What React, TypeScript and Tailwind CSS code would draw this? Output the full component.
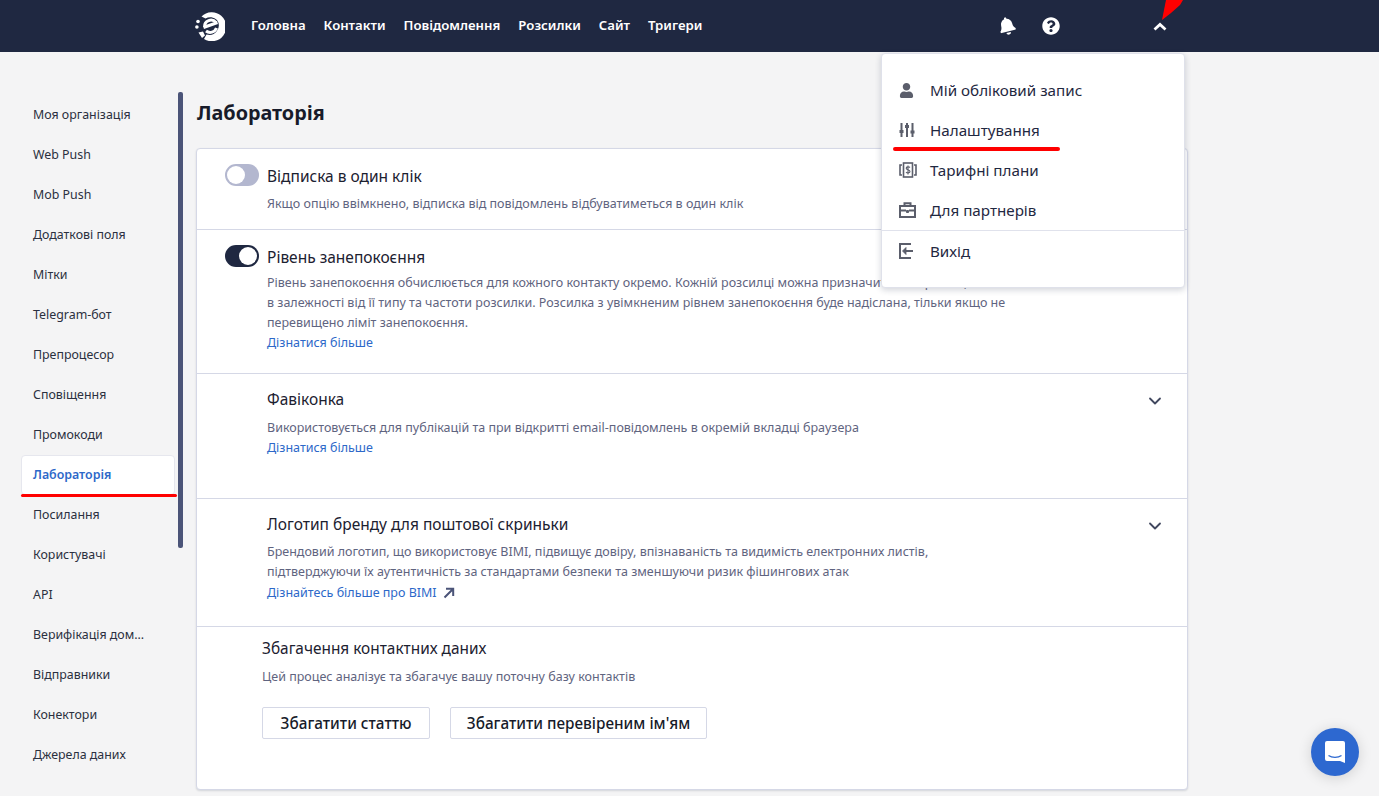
import React from 'react';
import { ChevronDown } from 'lucide-react';
import { FaBell, FaQuestionCircle, FaUser } from 'react-icons/fa';

const font = "font-['Noto_Sans',sans-serif]";

const navItems = ['Головна', 'Контакти', 'Повідомлення', 'Розсилки', 'Сайт', 'Тригери'];

const sideItems = [
  'Моя організація',
  'Web Push',
  'Mob Push',
  'Додаткові поля',
  'Мітки',
  'Telegram-бот',
  'Препроцесор',
  'Сповіщення',
  'Промокоди',
  'Лабораторія',
  'Посилання',
  'Користувачі',
  'API',
  'Верифікація дом...',
  'Відправники',
  'Конектори',
  'Джерела даних',
];

const Logo = () => (
  <svg width="30" height="30" viewBox="0 0 30 30" fill="none">
    {/* outer ring, open on the left */}
    <path d="M6.5 5.5A14.5 14.5 0 1 1 9 28L11.5 23.5A9.5 9.5 0 0 0 22 9A9.5 9.5 0 0 0 10.5 7.5Z" fill="#fff" />
    {/* the e */}
    <path d="M8.5 16.5L22.5 11.5M9.5 16A6.5 6.5 0 0 1 21 11.5M21.5 17A6.8 6.8 0 0 1 11 20" stroke="#fff" strokeWidth="3" />
    <circle cx="3" cy="10.5" r="1.8" fill="#fff" />
    <circle cx="1.9" cy="16" r="1.8" fill="#fff" />
    <path d="M3.5 21.5L8 20.5L10 24.5L7 27Z" fill="#fff" />
  </svg>
);

const SlidersIcon = () => (
  <svg width="16" height="16" viewBox="0 0 16 16" fill="none" stroke="#5b5e6b" strokeWidth="2">
    <path d="M2.5 1V15M8 1V15M13.5 1V15" />
    <path d="M0.5 9.5h4M6 4.5h4M11.5 10h4" strokeWidth="2.8" />
  </svg>
);

const PlansIcon = () => (
  <svg width="18" height="16" viewBox="0 0 18 16" fill="none" stroke="#5b5e6b" strokeWidth="1.6">
    <rect x="4.5" y="1" width="9" height="14" />
    <path d="M3 3H1V13H3M15 3H17V13H15" />
    <path d="M11 5.5C10 4.5 7.2 4.5 7.2 6.2C7.2 8 11 7.6 11 9.5C11 11.2 8 11.2 7 10.2M9 3.5V12.5" strokeWidth="1.1" />
  </svg>
);

const CaseIcon = () => (
  <svg width="17" height="16" viewBox="0 0 17 16" fill="none" stroke="#5b5e6b" strokeWidth="2">
    <rect x="1" y="4" width="15" height="11" />
    <path d="M5.5 4V1.2H11.5V4M1 8.5H7M10 8.5H16" />
    <path d="M7.5 8.5H9.5V10.5H7.5Z" fill="#5b5e6b" strokeWidth="1" />
  </svg>
);

const ExitIcon = () => (
  <svg width="15" height="16" viewBox="0 0 15 16" fill="none" stroke="#5b5e6b" strokeWidth="2">
    <path d="M12 1H1V15H12" />
    <path d="M6 8H14" />
    <path d="M3.5 8L7 4.5V11.5Z" fill="#5b5e6b" strokeWidth="0.8" />
  </svg>
);

const Toggle = ({ on }: { on: boolean }) => (
  <span
    className={`flex h-[22px] w-[34px] shrink-0 items-center rounded-full px-[2px] ${
      on ? 'justify-end bg-[#1f2841]' : 'justify-start bg-[#b3b7cf]'
    }`}
  >
    <span className="h-[18px] w-[18px] rounded-full bg-white" />
  </span>
);

const More = ({ children }: { children: React.ReactNode }) => (
  <a className="text-[12.5px] leading-[20px] text-[#2d68c9]">{children}</a>
);

const Section = ({
  title,
  toggle,
  chevron,
  className,
  children,
}: {
  title: string;
  toggle?: 'on' | 'off';
  chevron?: boolean;
  className: string;
  children: React.ReactNode;
}) => (
  <section className={`relative border-b border-[#d5d8e6] pr-[22px] pl-[28px] ${className}`}>
    <div className="flex h-[24px] items-center gap-[8px]">
      {toggle ? <Toggle on={toggle === 'on'} /> : <span className="w-[34px]" />}
      <h3 className="mt-[4px] grow text-[15.5px] text-[#1c2130]">{title}</h3>
      {chevron && <ChevronDown size={20} strokeWidth={2.2} className="mt-[6px] text-[#41485f]" />}
    </div>
    <div className="ml-[42px] max-w-[750px] text-[12.5px] leading-[20px] text-[#5f6480]">{children}</div>
  </section>
);

const MenuRow = ({ icon, label }: { icon: React.ReactNode; label: string }) => (
  <div className="flex h-[40px] items-center">
    <span className="flex w-[48px] justify-start pl-[17px]">{icon}</span>
    <span className="text-[15.2px] text-[#1f2841]">{label}</span>
  </div>
);

export default function App() {
  return (
    <div className={`${font} relative h-[796px] w-[1379px] overflow-hidden bg-[#f4f4f5]`}>
      <header className="flex h-[52px] items-center bg-[#1f2841] pl-[195px] text-white">
        <Logo />
        <nav className="ml-[26px] flex gap-[18px] text-[13.2px] font-semibold">
          {navItems.map((item) => (
            <a key={item}>{item}</a>
          ))}
        </nav>
        <div className="ml-[296px] flex items-center gap-[26px]">
          <FaBell size={18} className="rotate-[-14deg]" />
          <FaQuestionCircle size={18} />
        </div>
        <svg className="ml-[93px]" width="14" height="9" viewBox="0 0 14 9" fill="none">
          <path d="M1.5 7.5L7 2.5L12.5 7.5" stroke="#fff" strokeWidth="2.8" />
        </svg>
      </header>

      <div className="flex">
        <aside className="relative ml-[21px] w-[154px] shrink-0 pt-[43px]">
          {sideItems.map((item) =>
            item === 'Лабораторія' ? (
              <div
                key={item}
                className="flex h-[40px] items-center rounded-[4px] border border-[#e6e7ee] bg-white pl-[11px] text-[12.4px] font-semibold text-[#2d68c9]"
              >
                {item}
              </div>
            ) : (
              <div key={item} className="flex h-[40px] items-center pl-[12px] text-[12.4px] text-[#2b3040]">
                {item}
              </div>
            ),
          )}
          <div className="absolute top-[40px] left-[157px] h-[456px] w-[5px] rounded-[2px] bg-[#4b5478]" />
          <div className="absolute top-[442px] left-0 h-[3px] w-[156px] rounded-full bg-[#ff0000]" />
        </aside>

        <main className="ml-[21px] w-[992px] shrink-0">
          <h1 className="mt-[47px] h-[49px] pl-[1px] text-[19.8px] leading-[28px] font-bold text-[#171b2a]">Лабораторія</h1>
          <div className="h-[642px] rounded-[4px] border border-[#d5d8e6] bg-white shadow-[0_1px_2px_rgba(30,40,70,0.15)]">
            <Section title="Відписка в один клік" toggle="off" className="h-[81px] pt-[14px]">
              <p className="mt-[7px]">Якщо опцію ввімкнено, відписка від повідомлень відбуватиметься в один клік</p>
            </Section>
            <Section title="Рівень занепокоєння" toggle="on" className="h-[144px] pt-[14px]">
              <p className="mt-[5px]">
                Рівень занепокоєння обчислюється для кожного контакту окремо. Кожній розсилці можна призначити свій рівень,
                <br />
                в залежності від її типу та частоти розсилки. Розсилка з увімкненим рівнем занепокоєння буде надіслана, тільки якщо не
                перевищено ліміт занепокоєння.
              </p>
              <More>Дізнатися більше</More>
            </Section>
            <Section title="Фавіконка" chevron className="h-[125px] pt-[12px]">
              <p className="mt-[8px]">Використовується для публікацій та при відкритті email-повідомлень в окремій вкладці браузера</p>
              <More>Дізнатися більше</More>
            </Section>
            <Section title="Логотип бренду для поштової скриньки" chevron className="h-[128px] pt-[12px]">
              <p className="mt-[7px]">
                Брендовий логотип, що використовує BIMI, підвищує довіру, впізнаваність та видимість електронних листів,
                підтверджуючи їх аутентичність за стандартами безпеки та зменшуючи ризик фішингових атак
              </p>
              <div className="mt-[1px] flex items-center gap-[6px]">
                <More>Дізнайтесь більше про BIMI</More>
                <svg width="12" height="12" viewBox="0 0 12 12" fill="none" stroke="#4b5478" strokeWidth="2">
                  <path d="M1.5 10.5L10 2M3 1.8H10.2V9" />
                </svg>
              </div>
            </Section>
            <section className="pt-[11px] pl-[65px]">
              <h3 className="text-[15.4px] leading-[22px] text-[#1c2130]">Збагачення контактних даних</h3>
              <p className="mt-[7px] text-[12.5px] leading-[20px] text-[#5f6480]">Цей процес аналізує та збагачує вашу поточну базу контактів</p>
              <div className="mt-[20px] flex gap-[20px]">
                <button className="h-[32px] w-[168px] rounded-[2px] border border-[#d5d8e6] bg-white text-[15.3px] font-medium text-[#171b2a]">
                  Збагатити статтю
                </button>
                <button className="h-[32px] w-[257px] rounded-[2px] border border-[#d5d8e6] bg-white text-[15.3px] font-medium text-[#171b2a]">
                  Збагатити перевіреним ім'ям
                </button>
              </div>
            </section>
          </div>
        </main>
      </div>

      {/* dropdown */}
      <div className="absolute top-[53px] left-[881px] h-[235px] w-[304px] rounded-[4px] border border-[#dfe1ea] bg-white pt-[16px] shadow-[0_2px_6px_rgba(30,40,70,0.2)]">
        <MenuRow icon={<FaUser size={15} color="#5b5e6b" />} label="Мій обліковий запис" />
        <MenuRow icon={<SlidersIcon />} label="Налаштування" />
        <MenuRow icon={<PlansIcon />} label="Тарифні плани" />
        <MenuRow icon={<CaseIcon />} label="Для партнерів" />
        <div className="border-t border-[#e0e2ec]">
          <MenuRow icon={<ExitIcon />} label="Вихід" />
        </div>
        <div className="absolute top-[93px] left-[11px] h-[4px] w-[167px] rounded-full bg-[#ff0000]" />
      </div>

      {/* annotation arrow */}
      <svg className="absolute top-0 left-[1160px]" width="24" height="21" viewBox="0 0 24 21">
        <path d="M2 20L6 0H23L20 5L11 13Z" fill="#ff0000" />
      </svg>

      {/* chat launcher */}
      <div className="absolute top-[728px] left-[1311px] flex h-[48px] w-[48px] items-center justify-center rounded-full bg-[#2d68d0] shadow-[0_2px_14px_rgba(0,0,0,0.15)]">
        <svg width="22" height="24" viewBox="0 0 22 24">
          <path d="M3 1H19A2 2 0 0 1 21 3V23L16 21H3A2 2 0 0 1 1 19V3A2 2 0 0 1 3 1Z" fill="#fff" />
          <path d="M4.5 15.5C8 18 14 18 17.5 15.5" stroke="#2d68d0" strokeWidth="1.2" fill="none" />
        </svg>
      </div>
    </div>
  );
}
